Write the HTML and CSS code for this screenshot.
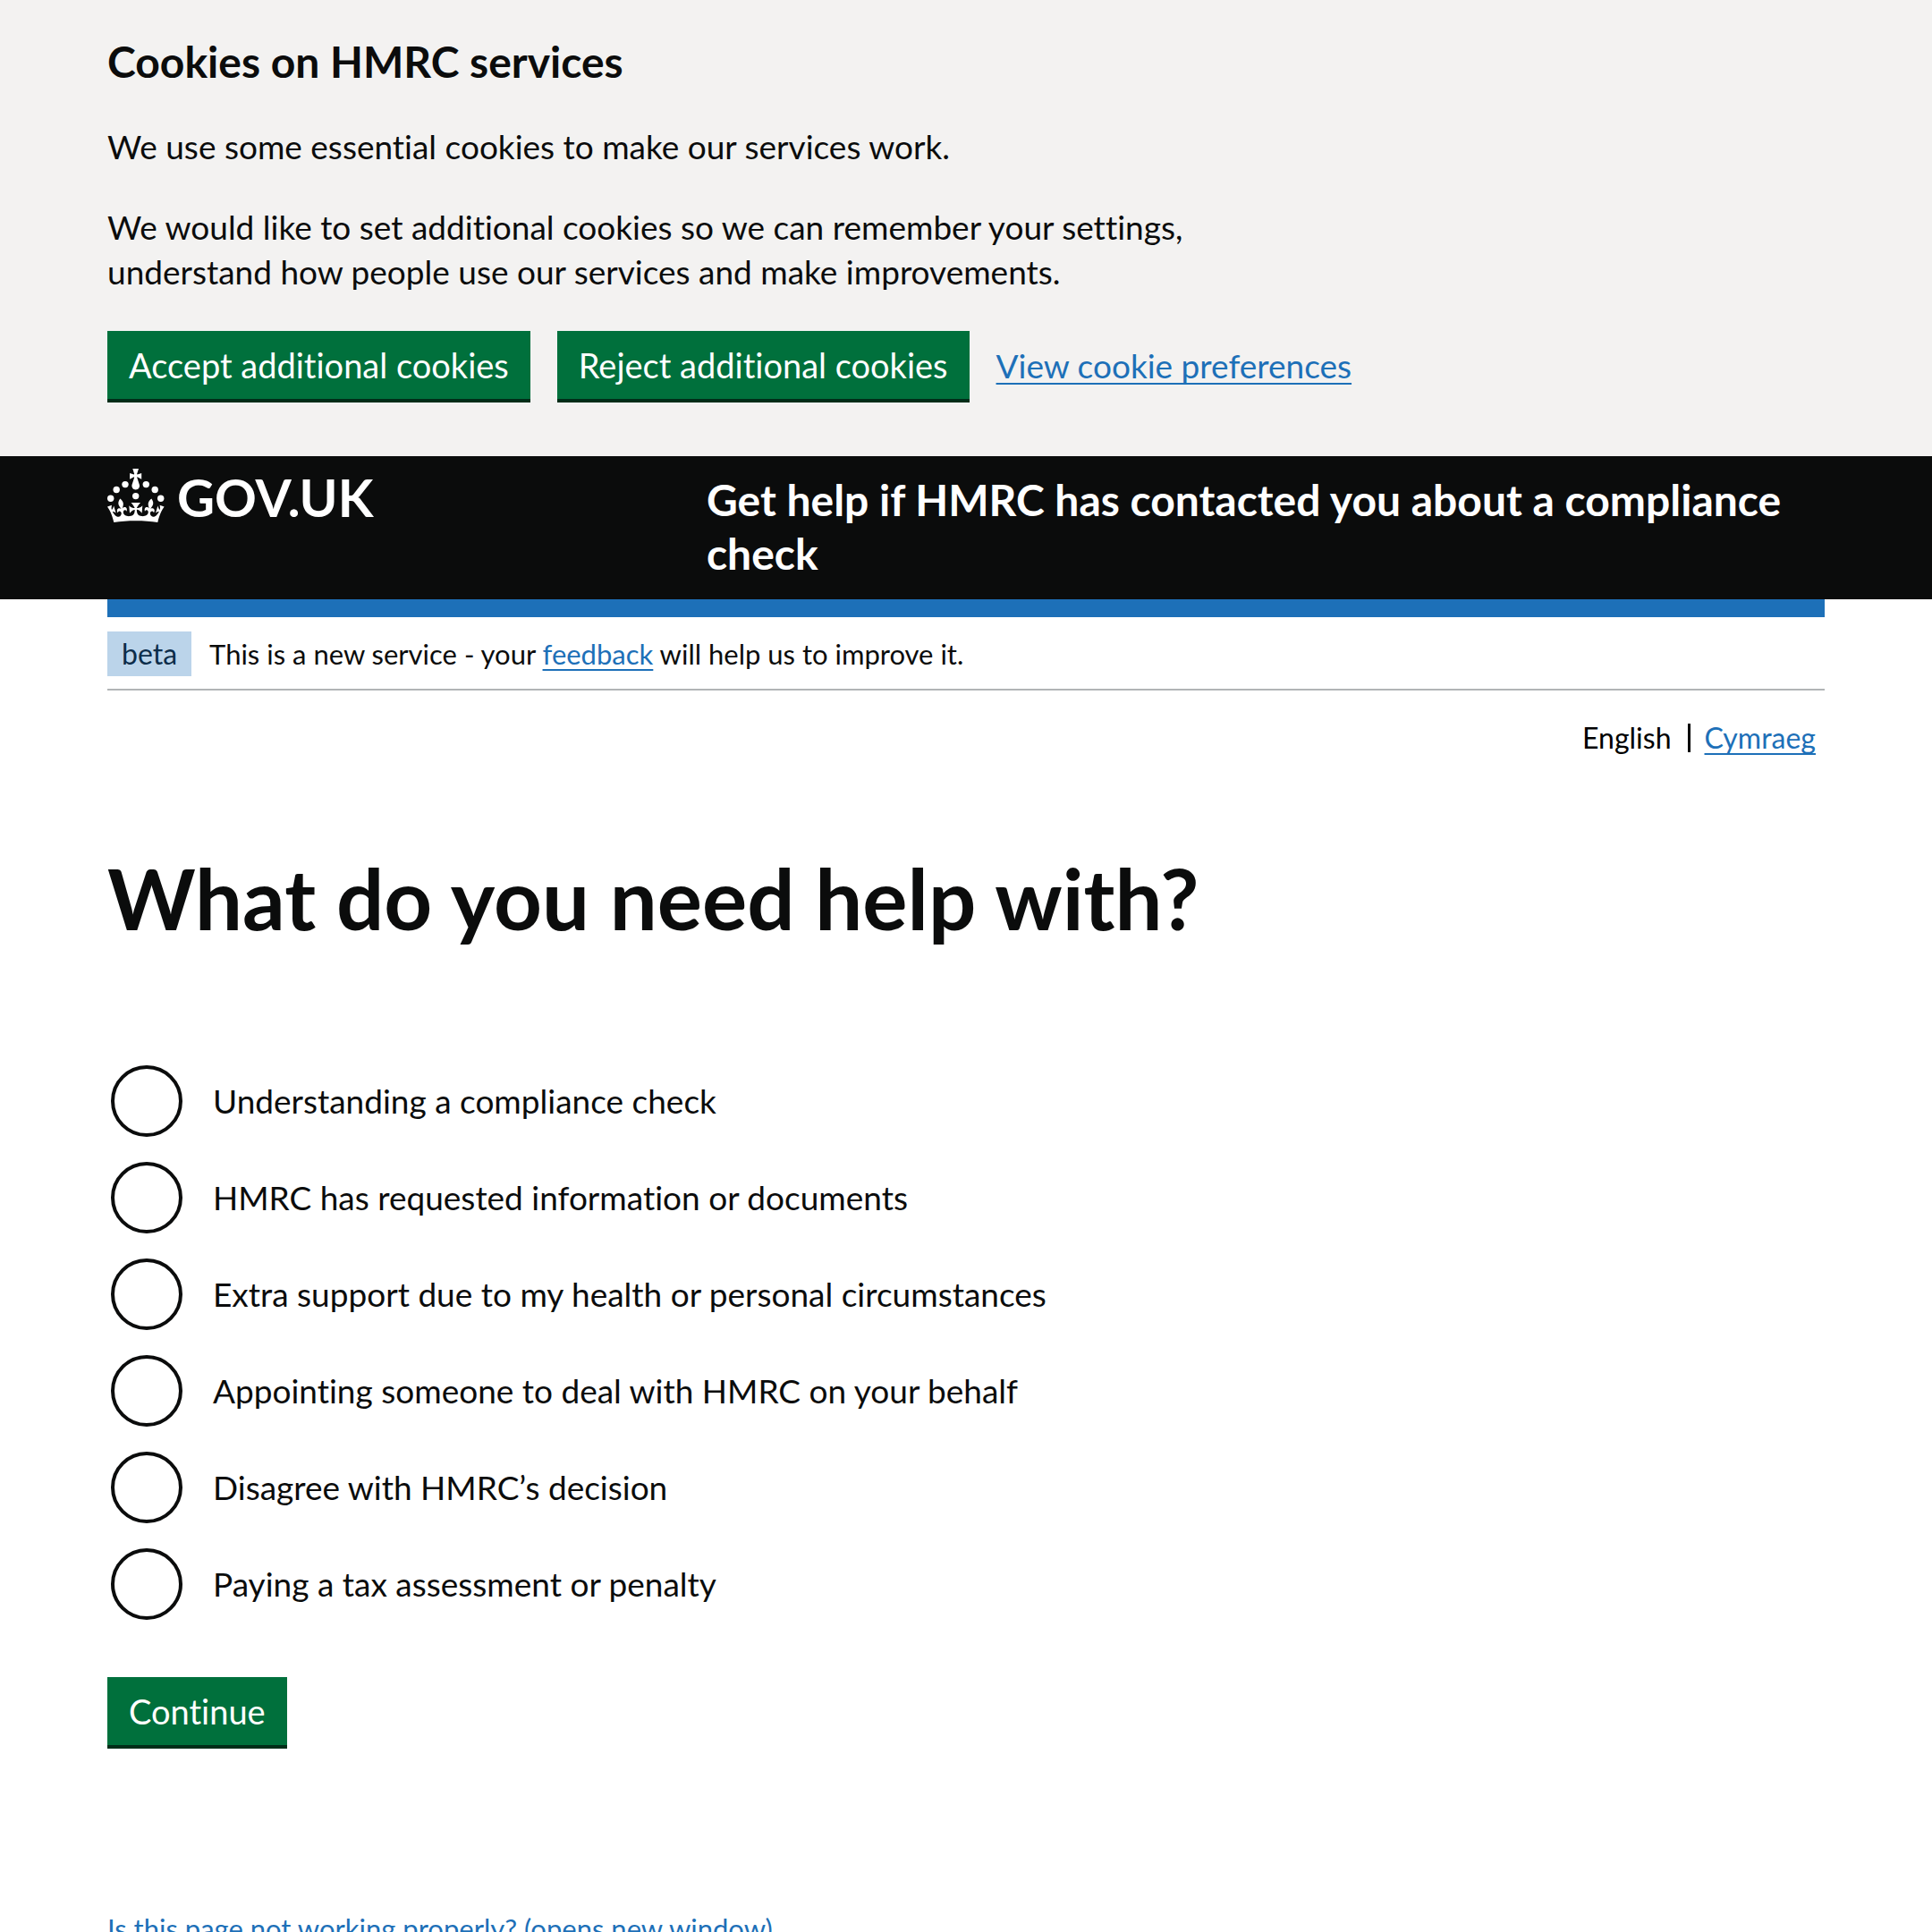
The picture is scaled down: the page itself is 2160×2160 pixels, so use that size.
FILE: index.html
```html
<!DOCTYPE html>
<html lang="en">
<head>
<meta charset="utf-8">
<meta name="viewport" content="width=device-width, initial-scale=1">
<title>What do you need help with?</title>
<link rel="stylesheet" href="styles.css">
</head>
<body>
<section class="cookie-banner" aria-label="Cookies on HMRC services">
  <div class="container">
    <div class="cookie-message">
      <h2 class="heading-m">Cookies on HMRC services</h2>
      <p>We use some essential cookies to make our services work.</p>
      <p>We would like to set additional cookies so we can remember your settings, understand how people use our services and make improvements.</p>
    </div>
    <div class="button-group">
      <button type="button" class="button">Accept additional cookies</button>
      <button type="button" class="button">Reject additional cookies</button>
      <a class="link" href="#cookies">View cookie preferences</a>
    </div>
  </div>
</section>

<header class="header">
  <div class="container header-row">
    <a class="logo" href="#home">
      <svg class="crown" viewBox="0 0 64 60" width="64" height="60" fill="currentColor" aria-hidden="true">
        <circle cx="20" cy="17.6" r="3.7"/><circle cx="10.2" cy="23.5" r="3.7"/><circle cx="3.7" cy="33.2" r="3.7"/><circle cx="31.7" cy="30.6" r="3.7"/><circle cx="43.3" cy="17.6" r="3.7"/><circle cx="53.2" cy="23.5" r="3.7"/><circle cx="59.7" cy="33.2" r="3.7"/>
        <path d="M33.1,9.8c.2-.1.3-.3.5-.5l4.6,2.4v-6.8l-4.6,1.5c-.1-.2-.3-.3-.5-.5l1.9-5.9h-6.7l1.9,5.9c-.2.1-.3.3-.5.5l-4.6-1.5v6.8l4.6-2.4c.1.2.3.3.5.5l-2.6,8c-.9,2.8,1.2,5.7,4.1,5.7h0c3,0,5.1-2.9,4.1-5.7l-2.6-8ZM37,37.9s-3.4,3.8-4.1,6.1c2.2,0,4.2-.5,6.4-2.8l-.7,8.5c-2-2.8-4.4-4.1-5.7-3.8.1,3.1.5,6.7,5.8,7.2,3.7.3,6.7-1.5,7-3.8.4-2.6-2-4.3-3.7-1.6-1.4-4.5,2.4-6.1,4.9-3.2-1.9-4.5-1.8-7.7,2.4-10.9,3,4,2.6,7.3-1.2,11.1,2.4-1.3,6.2,0,4,4.6-1.2-2.8-3.7-2.2-4.2.2-.3,1.7.7,3.7,3,4.2,1.9.3,4.7-.9,7-5.9-1.3,0-2.4.7-3.9,1.7l2.4-8c.6,2.3,1.4,3.7,2.2,4.5.6-1.6.5-2.8,0-5.3l5,1.8c-2.6,3.6-5.2,8.7-7.3,17.5-7.4-1.1-15.7-1.7-24.5-1.7h0c-8.8,0-17.1.6-24.5,1.7-2.1-8.9-4.7-13.9-7.3-17.5l5-1.8c-.5,2.5-.6,3.7,0,5.3.8-.8,1.6-2.3,2.2-4.5l2.4,8c-1.5-1-2.6-1.7-3.9-1.7,2.3,5,5.2,6.2,7,5.9,2.3-.4,3.3-2.4,3-4.2-.5-2.4-3-3.1-4.2-.2-2.2-4.6,1.6-6,4-4.6-3.7-3.7-4.2-7.1-1.2-11.1,4.2,3.2,4.3,6.4,2.4,10.9,2.5-2.8,6.3-1.3,4.9,3.2-1.8-2.7-4.1-1-3.7,1.6.3,2.3,3.3,4.1,7,3.8,5.4-.5,5.7-4.2,5.8-7.2-1.3-.2-3.7,1-5.7,3.8l-.7-8.5c2.2,2.3,4.2,2.7,6.4,2.8-.7-2.3-4.1-6.1-4.1-6.1h10.6Z"/>
      </svg>
      <span class="logo-text">GOV.UK</span>
    </a>
    <a class="service-name" href="#start">Get help if HMRC has contacted you about a compliance check</a>
  </div>
</header>

<div class="container">
  <div class="blue-bar"></div>
  <div class="phase-banner">
    <strong class="tag">beta</strong>
    <span>This is a new service - your <a class="link" href="#feedback">feedback</a> will help us to improve it.</span>
  </div>
  <nav class="languages" aria-label="Language switcher">
    <span>English</span>
    <a class="link" href="#cy" lang="cy">Cymraeg</a>
  </nav>

  <main>
    <form>
      <fieldset class="fieldset">
        <legend class="legend"><h1 class="heading-xl">What do you need help with?</h1></legend>
        <div class="radios">
          <div class="radio"><input type="radio" name="help" id="help-1"><label for="help-1">Understanding a compliance check</label></div>
          <div class="radio"><input type="radio" name="help" id="help-2"><label for="help-2">HMRC has requested information or documents</label></div>
          <div class="radio"><input type="radio" name="help" id="help-3"><label for="help-3">Extra support due to my health or personal circumstances</label></div>
          <div class="radio"><input type="radio" name="help" id="help-4"><label for="help-4">Appointing someone to deal with HMRC on your behalf</label></div>
          <div class="radio"><input type="radio" name="help" id="help-5"><label for="help-5">Disagree with HMRC’s decision</label></div>
          <div class="radio"><input type="radio" name="help" id="help-6"><label for="help-6">Paying a tax assessment or penalty</label></div>
        </div>
      </fieldset>
      <button type="button" class="button">Continue</button>
    </form>
    <p class="report"><a class="link" href="#report">Is this page not working properly? (opens new window)</a></p>
  </main>
</div>
</body>
</html>
```

FILE: styles.css
```css
*,
*::before {
  box-sizing: border-box;
}

html {
  overflow: hidden;
}

body {
  margin: 0;
  background: #fff;
  color: #0b0c0c;
  font-family: Lato, "Liberation Sans", sans-serif;
  font-size: 37px;
  font-variant-ligatures: none;
  line-height: 50px;
}

h1,
h2,
p {
  margin: 0;
}

.container {
  margin: 0 120px;
}

.link {
  color: #1d70b8;
  text-decoration: underline;
  text-decoration-thickness: 2px;
  text-underline-offset: 5px;
  text-decoration-skip-ink: none;
}

/* Cookie banner */

.cookie-banner {
  padding: 39px 0 60px;
  background: #f3f2f1;
}

.cookie-message {
  display: grid;
  gap: 40px;
  max-width: 1270px;
}

.heading-m {
  font-size: 48px;
  line-height: 60px;
}

.button-group {
  display: flex;
  flex-wrap: wrap;
  align-items: baseline;
  gap: 30px;
  margin-top: 41px;
}

.button {
  display: block;
  height: 80px;
  padding: 0 24px;
  border: 0;
  border-bottom: 4px solid #002d18;
  background: #00703c;
  color: #fff;
  font: inherit;
  font-size: 38px;
  font-variant-ligatures: none;
}

/* Header */

.header {
  background: #0b0c0c;
  color: #fff;
}

.header-row {
  display: flex;
  align-items: flex-start;
  gap: 30px;
  padding: 14px 0 21px;
}

.header a {
  color: inherit;
  text-decoration: none;
}

.logo {
  display: flex;
  flex: 0 0 33.3333%;
  gap: 14px;
}

.logo-text {
  font-size: 58px;
  font-weight: 700;
  line-height: 64px;
}

.service-name {
  padding-top: 5px;
  font-size: 48px;
  font-weight: 700;
  line-height: 60px;
}

.blue-bar {
  height: 20px;
  background: #1d70b8;
}

/* Phase banner and language switcher */

.phase-banner {
  display: flex;
  align-items: baseline;
  gap: 20px;
  padding: 16px 0 14px;
  border-bottom: 2px solid #b1b4b6;
  font-size: 31px;
}

.tag {
  padding: 0 16px;
  background: #bbd4ea;
  color: #0c2d4a;
  font-size: 32px;
  font-weight: 400;
}

.languages {
  display: flex;
  justify-content: flex-end;
  align-items: center;
  gap: 16px;
  padding: 28px 10px;
  font-size: 32px;
}

.languages span {
  display: flex;
  align-items: center;
  gap: 18px;
  color: #000;
}

.languages span::after {
  width: 3px;
  height: 32px;
  background: #000;
  content: "";
}

/* Question */

.fieldset {
  min-width: 0;
  margin: 76px 0 64px;
  padding: 0;
  border: 0;
}

.legend {
  padding: 0;
}

.heading-xl {
  font-size: 94px;
  line-height: 100px;
}

.radios {
  display: grid;
  gap: 28px;
  padding-top: 137px;
}

.radio {
  display: flex;
  align-items: center;
  gap: 34px;
  padding-left: 4px;
}

.radio input {
  flex: none;
  width: 80px;
  height: 80px;
  margin: 0;
  border: 4px solid #0b0c0c;
  border-radius: 50%;
  background: #fff;
  appearance: none;
}

.radio input:checked {
  background: radial-gradient(#0b0c0c 20px, #fff 21px);
}

.report {
  margin-top: 176px;
  font-size: 31px;
}
```
